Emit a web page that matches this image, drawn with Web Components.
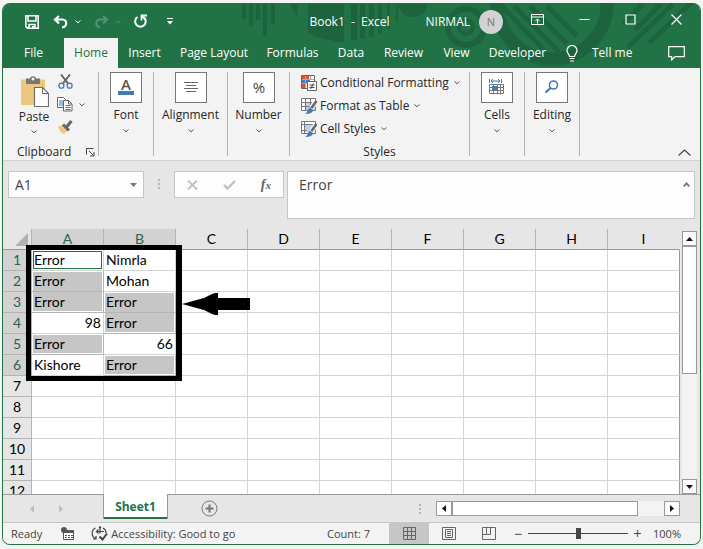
<!DOCTYPE html>
<html lang="en">
<head>
<meta charset="utf-8">
<title>Book1 - Excel</title>
<style>
html { height: 100%; }
body { margin: 0; min-height: 100%; box-sizing: border-box; padding: 3px 2px 4px; display: flex; background: #f4f4f4; font: 12px/16px "Open Sans", "Noto Sans", sans-serif; color: #262626; }
</style>
</head>
<body>
<xl-window>
  <xl-header slot="header"></xl-header>
  <xl-ribbon slot="ribbon"></xl-ribbon>
  <xl-formula-bar slot="formula" cell="A1" value="Error"></xl-formula-bar>
  <xl-grid slot="grid"></xl-grid>
  <xl-sheet-bar slot="sheets">Sheet1</xl-sheet-bar>
  <xl-status-bar slot="status"></xl-status-bar>
</xl-window>
<script>
const ICONS = {
  save: [14, 14, '<path d="M.8.8h12.4v12.4H2.6L.8 11.6zM3 1v5h8V1M4 13V9.5h6V13" fill="none" stroke="#fff" stroke-width="1.6"/><path d="M7 11h2v2.500H7z" fill="#fff"/>'],
  undo: [16, 14, '<path d="M6 1 2 4.500l4 4M2.500 4.500h7c5 0 5 7.500-.5 8" fill="none" stroke="#fff" stroke-width="2.200"/>'],
  redo: [16, 14, '<path d="m10 1 4 3.500-4 4M13.500 4.500h-6C2 4.500 2 11 7 12.500" fill="none" stroke="#569273" stroke-width="2.200"/>'],
  repeat: [15, 15, '<path d="M4.500 3A5.300 5.300 0 1 0 11 3.500" fill="none" stroke="#fff" stroke-width="2"/><path d="M8.500 6.500V1.500H14M9 2l3 3" fill="none" stroke="#fff" stroke-width="1.800"/>'],
  custom: [6, 7, '<path d="M0 .5h6" stroke="#fff"/><path d="M0 3h6L3 6.500z" fill="#fff"/>'],
  chev: [6, 4, '<path d="m.5.5 2.500 2.300L5.500.5" fill="none" stroke="currentColor"/>'],
  ribbonopts: [13, 11, '<path d="M.5.5h12v10H.5zM.5 3h12M6.500 9.500V5M4.500 7l2-2 2 2" fill="none" stroke="#fff"/>'],
  min: [11, 11, '<path d="M.5 5.500h10" stroke="#fff"/>'],
  max: [11, 11, '<path d="M1 1h9v9H1z" fill="none" stroke="#fff" stroke-width="1.200"/>'],
  close: [11, 11, '<path d="m.5.5 10 10m0-10-10 10" stroke="#fff" stroke-width="1.200"/>'],
  bulb: [12, 17, '<path d="M3.500 11.500C3.500 9 1 8.500 1 5.500a5 5 0 0 1 10 0c0 3-2.500 3.500-2.500 6zM3.500 13.500h5M4 16h4" fill="none" stroke="#fff" stroke-width="1.200"/>'],
  comment: [17, 15, '<path d="M.7.7h15.600v10H7L3.700 14v-3.300h-3z" fill="none" stroke="#fff" stroke-width="1.200"/>'],
  paste: [29, 31, '<path d="M1 3.500h24V29H1z" fill="#edc77f"/><path d="M6 2.500h4C10-.5 16-.5 16 2.500h4V8H6z" fill="#777"/><circle cx="13" cy="3" r="1.500" fill="#f3f3f3"/><path d="M14.500 11.500h8l6 6v13h-14z" fill="#fff" stroke="#6d6d6d" stroke-width="1.200"/><path d="M22.500 11.500v6h6" fill="none" stroke="#6d6d6d"/>'],
  cut: [15, 15, '<path d="m3 .5 7.500 9.500M12 .5 4.500 10" stroke="#666" stroke-width="2"/><circle cx="3.400" cy="11.700" r="2.500" fill="none" stroke="#4379b5" stroke-width="1.300"/><circle cx="11.600" cy="11.700" r="2.500" fill="none" stroke="#4379b5" stroke-width="1.300"/>'],
  copy: [16, 15, '<path d="M.5.5h6l2 2v8h-8z" fill="#fff" stroke="#666"/><path d="M2 4h4M2 6h4M2 8h4" stroke="#4379b5"/><path d="M6.500 3.500h5l3.500 3.500v7H6.500z" fill="#fff" stroke="#666"/><path d="M11.500 3.500V7H15" fill="none" stroke="#666"/><path d="M8.500 8.500h5m-5 2h5m-5 2h5" stroke="#4379b5"/>'],
  brush: [16, 14, '<path d="m1 6.500 5-1.500 5 5-4 4C4 13 2 10.500 1 6.500z" fill="#edc77f"/><path d="m6 4.500 6 6M9.500 7l5-6" stroke="#666" stroke-width="3"/>'],
  launcher: [9, 9, '<path d="M.5 6.500v-6h7M3 3l4.500 4.500M8 4v4H4" fill="none" stroke="#444"/>'],
  font: [32, 31, '<text x="16" y="18" text-anchor="middle" font-family="Open Sans" font-size="15" font-weight="600" fill="#555">A</text><path d="M8 19h16v4H8z" fill="#4379b5"/>'],
  align: [32, 31, '<path d="M9 10.500h14M11 13.500h10M9 16.500h14M11 19.500h10" stroke="#666"/>'],
  number: [32, 31, '<text x="16" y="21" text-anchor="middle" font-family="Open Sans" font-size="15" fill="#444">%</text>'],
  cells: [32, 31, '<path d="M8.500 12.500h14v9h-14zM8.500 15.500h14m-14 3h14m-10-6v10m4-10v10m3-10v10" fill="#fff" stroke="#777"/><path d="M11 14h6v4h-6z" fill="#4379b5"/><path d="M8.500 7v4m12-4v4M10 9h9M12 7l-2 2 2 2m5-4 2 2-2 2" fill="none" stroke="#4379b5"/>'],
  editing: [32, 31, '<circle cx="17.500" cy="13" r="4" fill="none" stroke="#4379b5" stroke-width="1.600"/><path d="m14.500 16-5 4.500" stroke="#4379b5" stroke-width="2.200"/>'],
  cond: [16, 16, '<path d="M.5.5h13v13H.5z" fill="#fff" stroke="#666"/><path d="M1 1h7v3H1zM1 9h4v4H1z" fill="#d65532"/><path d="M1 5h8v3H1z" fill="#4379b5"/><path d="M9.500 1v4M4.500 1v12M1 4.500h12M1 8.500h6" stroke="#aaa"/><path d="M6.500 6.500h9v9h-9z" fill="#fff" stroke="#666"/><path d="M8.500 10h5m-5 2.500h5M12.500 8.500l-3 5.500" stroke="#444"/>'],
  table: [16, 16, '<path d="M.5.5h14v12H.5z" fill="#fff"/><path d="M5 5h9v8H5z" fill="#bcd0e6"/><path d="M.5.5h14v12H.5zM.5 4.500h14m-14 4h14m-10-8v12m5-12v12" fill="none" stroke="#777"/><path d="m14.500 4-4 6" stroke="#f3f3f3" stroke-width="5"/><path d="m15.500 3-5 7" stroke="#666" stroke-width="2.500"/><path d="M4 16c3-1 2-5 5-6l3 2c0 3-4 4-8 4z" fill="#4379b5"/>'],
  styles: [16, 16, '<path d="M.5.5h14v12H.5z" fill="#fff"/><path d="M4 4h8v7H4z" fill="#bcd0e6"/><path d="M.5.5h14v12H.5zM.5 3.500h14m-11-3v12m-3-3h5" fill="none" stroke="#777"/><path d="m14.500 4-4 6" stroke="#f3f3f3" stroke-width="5"/><path d="m15.500 3-5 7" stroke="#666" stroke-width="2.500"/><path d="M4 16c3-1 2-5 5-6l3 2c0 3-4 4-8 4z" fill="#4379b5"/>'],
  collapse: [13, 7, '<path d="m.5 6.500 6-5.500 6 5.500" fill="none" stroke="#444" stroke-width="1.200"/>'],
  drop: [7, 4, '<path d="M0 0h7L3.500 4z" fill="#777"/>'],
  grip: [2, 10, '<path d="M0 0h2v2H0zM0 4h2v2H0zM0 8h2v2H0z" fill="#b4b4b4"/>'],
  cancel: [11, 10, '<path d="m1 .5 9 9m0-9-9 9" stroke="#bfbfbf" stroke-width="1.800"/>'],
  enter: [13, 10, '<path d="m1 5 3.500 3.500L12 1" fill="none" stroke="#bfbfbf" stroke-width="2.400"/>'],
  up: [7, 5, '<path d="m.7 4.300 2.800-3 2.800 3" fill="none" stroke="#777" stroke-width="1.800"/>'],
  corner: [13, 13, '<path d="M13 0v13H0z" fill="#b2b2b2"/>'],
  triup: [7, 4, '<path d="M0 4h7L3.500 0z" fill="#111"/>'],
  tridown: [7, 4, '<path d="M0 0h7L3.500 4z" fill="#111"/>'],
  trileft: [4, 7, '<path d="M4 0v7L0 3.500z" fill="#111"/>'],
  triright: [4, 7, '<path d="M0 0v7l4-3.500z" fill="#111"/>'],
  prev: [4, 8, '<path d="M4 0v8L0 4z" fill="#bdbdbd"/>'],
  next: [4, 8, '<path d="M0 0v8l4-4z" fill="#bdbdbd"/>'],
  add: [17, 17, '<circle cx="8.500" cy="8.500" r="7.500" fill="none" stroke="#777"/><path d="M8.500 4.500v8m-4-4h8" stroke="#777" stroke-width="2"/>'],
  macro: [13, 13, '<path d="M2.500 3.500h10v9h-10z" fill="#fff" stroke="#555"/><path d="M7 3h6v3H2V4z" fill="#555"/><path d="M4 8.500h2m1 0h2m1 0h2m-8 2h2m1 0h2m1 0h2" stroke="#555"/><circle cx="3" cy="3" r="3" fill="#555"/>'],
  access: [17, 15, '<path d="M4.500 2C0 4 0 10.500 4.500 12.500M2 13h3v-3M6 5.500h7M7.500 3.500l-2 2 2 2M9 2.500v5M12 2c2 1 3 2.500 3 5" fill="none" stroke="#444" stroke-width="1.200"/><circle cx="9" cy="1.500" r="1.200" fill="#444"/><path d="m8.500 10.500 3 3 4.500-6" fill="none" stroke="#444" stroke-width="2"/>'],
  normal: [13, 13, '<path d="M.5.5h12v12H.5zM.5 4.500h12m-12 4h12m-8-8v12m4-12v12" fill="none" stroke="#666"/>'],
  page: [14, 13, '<path d="M.5.5h13v12H.5zM3.500 2.500h7v8h-7zM5 4.500h4m-4 2h4m-4 2h4" fill="none" stroke="#666"/>'],
  breaks: [14, 13, '<path d="M.5.5h13v12H.5zM.5 7.500h8v-7M4.500.5v7" fill="none" stroke="#666"/>']
};

const BASE = `
  :host, *, *::before, *::after { box-sizing: border-box; }
  button, a { font: inherit; color: inherit; background: none; border: 0; padding: 0; margin: 0; text-decoration: none; white-space: nowrap; }
  button { display: inline-flex; align-items: center; justify-content: center; }
  input, textarea { font: inherit; color: inherit; border: 0; padding: 0; margin: 0; background: none; outline: none; }
`;

function define(name, css, html) {
  customElements.define(name, class extends HTMLElement {
    constructor() {
      super();
      const t = document.createElement('template');
      t.innerHTML = `<style>${BASE}${css}</style>${typeof html === 'function' ? html(this) : html}`;
      this.attachShadow({ mode: 'open' }).append(t.content.cloneNode(true));
    }
  });
}

define('xl-icon', ':host { display: inline-flex; flex: none; } svg { display: block; }', el => {
  const [w, h, body] = ICONS[el.getAttribute('name')];
  return `<svg width="${w}" height="${h}" viewBox="0 0 ${w} ${h}" aria-hidden="true">${body}</svg>`;
});

define('xl-window', `
  :host { flex: 1; min-width: 0; display: flex; flex-direction: column; border: 1px solid #217346; border-top: 0; border-radius: 8px; overflow: hidden; background: #e6e6e6; }
  .grid { flex: 1 1 0; min-height: 0; display: flex; }
`, `<slot name="header"></slot><slot name="ribbon"></slot><slot name="formula"></slot>
  <div class="grid"><slot name="grid"></slot></div><slot name="sheets"></slot><slot name="status"></slot>`);

define('xl-header', `
  :host { display: block; position: relative; background: #217346; color: #fff; }
  .art { position: absolute; top: 0; right: 0; width: 100%; height: 100%; }
  .row { position: relative; display: flex; align-items: center; }
  .title { height: 35px; padding: 2px 18px 0 22px; }
  .quick { display: flex; align-items: center; flex: 1; }
  .quick button + button { margin-left: 12px; }
  .quick .save + button { margin-left: 14px; }
  .quick button.more { margin-left: 6px; }
  .quick button.custom { margin-left: 19px; }
  .dim { color: #569273; }
  .name { margin: 0 36px 0 0; white-space: pre; }
  .user { gap: 9px; display: flex; align-items: center; margin-right: 28px; }
  .avatar { width: 24px; height: 24px; border-radius: 50%; background: #d2d2d2; color: #777; display: grid; place-items: center; font-size: 11px; }
  .controls { display: flex; gap: 35px; padding-bottom: 4px; }
  .tabs { height: 30px; padding: 0 15px 0 0; }
  nav { display: grid; grid-template-columns: 61px 54px 53px 86px 71px 46px 59px 47px 75px; height: 100%; }
  nav a { display: grid; place-items: center; }
  nav a.on { background: #f3f3f3; color: #217346; }
  .tell { gap: 14px; margin-left: 11px; }
  .end { margin-left: auto; }
`, `
  <svg class="art" viewBox="0 0 697 65" preserveAspectRatio="xMaxYMin slice" aria-hidden="true">
    <g fill="#1d633e"><path d="M239 1h4v15h-4zM246 1h4v22h-4zM253 1h4v16h-4zM260 1h4v32h-4zM268 1h4v20h-4zM287 1h7v13zM305 1h33v37q-18 0-33-8zM348 1h6v36h-6zM357 1h5v35h-5zM366 1h5v33h-5zM375 1h4v30h-4zM384 1h3v25h-3zM393 1h2v18h-2zM331 1h10v38h-10z"/><path d="M396 1a14 13 0 0 0 28 0z"/></g>
    <g fill="none" stroke="#1d633e"><circle cx="463" cy="24" r="18" stroke-width="6"/><circle cx="463" cy="24" r="7" stroke-width="4"/><circle cx="549" cy="1" r="55" stroke-width="13"/><path d="m499 3 42 44m-30-44 45 46m-29-46 37 38m-20-38 30 30M625 44l45-43M646 40l44-42M620 21l20-20m18 0-26 26" stroke-width="5"/></g>
  </svg>
  <div class="row title">
    <div class="quick">
      <button class="save" aria-label="Save"><xl-icon name="save"></xl-icon></button>
      <button aria-label="Undo"><xl-icon name="undo"></xl-icon></button>
      <button class="more" aria-label="Undo list"><xl-icon name="chev"></xl-icon></button>
      <button aria-label="Redo"><xl-icon name="redo"></xl-icon></button>
      <button class="more dim" aria-label="Redo list"><xl-icon name="chev"></xl-icon></button>
      <button aria-label="Repeat"><xl-icon name="repeat"></xl-icon></button>
      <button class="custom" aria-label="Customize"><xl-icon name="custom"></xl-icon></button>
    </div>
    <div class="name">Book1  -  Excel</div>
    <div class="user"><span>NIRMAL</span><span class="avatar">N</span></div>
    <div class="controls">
      <button aria-label="Ribbon display options"><xl-icon name="ribbonopts"></xl-icon></button>
      <button aria-label="Minimize"><xl-icon name="min"></xl-icon></button>
      <button aria-label="Maximize"><xl-icon name="max"></xl-icon></button>
      <button aria-label="Close"><xl-icon name="close"></xl-icon></button>
    </div>
  </div>
  <div class="row tabs">
    <nav><a href="#file">File</a><a href="#home" class="on">Home</a><a href="#insert">Insert</a><a href="#layout">Page Layout</a><a href="#formulas">Formulas</a><a href="#data">Data</a><a href="#review">Review</a><a href="#view">View</a><a href="#dev">Developer</a></nav>
    <button class="tell"><xl-icon name="bulb"></xl-icon>Tell me</button>
    <button class="end" aria-label="Comments"><xl-icon name="comment"></xl-icon></button>
  </div>`);

define('xl-ribbon-group', `
  :host { display: flex; flex-direction: column; justify-content: space-between; width: 55px; border-right: 1px solid #b4b4b4; }
  .body { display: flex; flex: 1; min-height: 0; }
`, `<div class="body"><slot></slot></div><slot name="label"></slot>`);

define('xl-big-button', `
  :host { display: block; flex: 1; min-width: 0; }
  button { width: 100%; flex-direction: column; color: #262626; }
  .box { border: 1px solid #777; background: #fff; width: 32px; height: 31px; display: grid; place-items: center; place-content: center; margin-bottom: 4px; }
  .chev { color: #555; margin-top: 6px; }
`, el => `<button><span class="box"><xl-icon name="${el.getAttribute('icon')}"></xl-icon></span><slot></slot><xl-icon class="chev" name="chev"></xl-icon></button>`);

define('xl-menu-button', `
  :host { display: block; height: 23px; }
  button { gap: 3px; height: 20px; }
  .chev { color: #555; margin-left: 2px; }
`, el => `<button><xl-icon name="${el.getAttribute('icon')}"></xl-icon><slot></slot><xl-icon class="chev" name="chev"></xl-icon></button>`);

define('xl-ribbon', `
  :host { display: flex; height: 93px; padding: 4px 9px 4px 0; background: #f3f3f3; border-bottom: 1px solid #d0d0d0; }
  .clip { width: 96px; } .w62 { width: 62px; } .w74 { width: 74px; } .styles { width: 180px; }
  .paste { flex-direction: column; width: 32px; margin: 4px 0 0 15px; justify-content: flex-start; align-self: flex-start; gap: 2px; }
  .paste .chev { margin-top: 3px; color: #555; }
  .small { display: grid; grid-template-columns: 18px 6px; column-gap: 5px; align-content: start; row-gap: 8px; margin: 2px 0 0 6px; color: #555; }
  .label { display: flex; justify-content: center; align-items: center; height: 16px; margin-bottom: -4px; }
  .clip .label { justify-content: space-between; padding: 0 3px 0 14px; }
  .list { padding: 1px 0 0 11px; }
  .fold { margin: auto 0 0 auto; }
`, `
  <xl-ribbon-group class="clip">
    <button class="paste"><xl-icon name="paste"></xl-icon>Paste<xl-icon class="chev" name="chev"></xl-icon></button>
    <div class="small"><button aria-label="Cut"><xl-icon name="cut"></xl-icon></button><span></span>
      <button aria-label="Copy"><xl-icon name="copy"></xl-icon></button><button aria-label="Copy options"><xl-icon name="chev"></xl-icon></button>
      <button aria-label="Format painter"><xl-icon name="brush"></xl-icon></button></div>
    <div slot="label" class="label">Clipboard<button aria-label="Clipboard settings"><xl-icon name="launcher"></xl-icon></button></div>
  </xl-ribbon-group>
  <xl-ribbon-group><xl-big-button icon="font">Font</xl-big-button></xl-ribbon-group>
  <xl-ribbon-group class="w74"><xl-big-button icon="align">Alignment</xl-big-button></xl-ribbon-group>
  <xl-ribbon-group class="w62"><xl-big-button icon="number">Number</xl-big-button></xl-ribbon-group>
  <xl-ribbon-group class="styles"><div class="list">
    <xl-menu-button icon="cond">Conditional Formatting</xl-menu-button>
    <xl-menu-button icon="table">Format as Table</xl-menu-button>
    <xl-menu-button icon="styles">Cell Styles</xl-menu-button></div>
    <div slot="label" class="label">Styles</div>
  </xl-ribbon-group>
  <xl-ribbon-group><xl-big-button icon="cells">Cells</xl-big-button></xl-ribbon-group>
  <xl-ribbon-group><xl-big-button icon="editing">Editing</xl-big-button></xl-ribbon-group>
  <button class="fold" aria-label="Collapse ribbon"><xl-icon name="collapse"></xl-icon></button>`);

define('xl-formula-bar', `
  :host { display: flex; align-items: flex-start; padding: 10px 5px 10px 5px; font-size: 14px; line-height: 20px; color: #444; }
  .box { background: #fdfdfd; border: 1px solid #c6c6c6; display: flex; align-items: center; }
  .name { width: 136px; height: 27px; padding: 0 6px; }
  .name input { flex: 1; min-width: 0; }
  .grip { margin: 8px 14px 0; }
  .tools { width: 110px; height: 27px; justify-content: space-between; padding: 0 12px; margin-right: 3px; }
  .fx { font: italic bold 14px/16px "Liberation Serif", serif; color: #666; }
  .fx small { font-size: 11px; }
  .formula { flex: 1; height: 48px; align-items: flex-start; padding: 3px 4px 0 11px; }
  textarea { flex: 1; min-width: 0; resize: none; height: 40px; overflow: hidden; }
  .formula button { margin-top: 7px; }
`, el => `
  <div class="box name"><input aria-label="Name box" value="${el.getAttribute('cell')}"><button aria-label="Names"><xl-icon name="drop"></xl-icon></button></div>
  <xl-icon class="grip" name="grip"></xl-icon>
  <div class="box tools"><button aria-label="Cancel"><xl-icon name="cancel"></xl-icon></button><button aria-label="Enter"><xl-icon name="enter"></xl-icon></button><button class="fx" aria-label="Insert function">f<small>x</small></button></div>
  <div class="box formula"><textarea aria-label="Formula">${el.getAttribute('value')}</textarea><button aria-label="Collapse formula bar"><xl-icon name="up"></xl-icon></button></div>`);

const DATA = [['Error', 'Nimrla'], ['Error', 'Mohan'], ['Error', 'Error'], ['98', 'Error'], ['Error', '66'], ['Kishore', 'Error']];
const COLS = 'ABCDEFGHI'.split('');
function cell(r, c) {
  const v = (DATA[r] || [])[c];
  if (v === undefined) return '<td></td>';
  const picked = (i) => (DATA[i] || [])[c] === 'Error' && !(i === 0 && c === 0);
  const k = [];
  if (r === 0 && c === 0) k.push('active');
  else if (v === 'Error') { k.push('sel'); if (!picked(r - 1)) k.push('top'); if (!picked(r + 1)) k.push('bottom'); }
  if (/^\d/.test(v)) k.push('num');
  return `<td class="${k.join(' ')}"><span>${v}</span></td>`;
}
define('xl-grid', `
  :host { flex: 1; min-width: 0; display: flex; }
  .sheet { position: relative; flex: 1; min-width: 0; overflow: hidden; height: 100%; }
  table { width: 100%; table-layout: fixed; border-collapse: separate; border-spacing: 0; background: #fff; font: 14px/20px Lato, "Open Sans", sans-serif; color: #000; }
  th, td { height: 21px; padding: 0; border: 0 solid #d4d4d4; border-width: 0 1px 1px 0; font-weight: 400; text-align: left; white-space: nowrap; }
  th { background: #e6e6e6; text-align: center; border-color: #b4b4b4; }
  thead th { border-bottom-color: #999; }
  th.on { background: #d2d2d2; color: #276748; }
  .rowhead { width: 29px; }
  tr > :last-child { border-right-color: #999; }
  thead th:last-child { border-right-color: #e6e6e6; }
  thead th:first-child { padding: 0 3px 0 0; }
  thead th:first-child xl-icon { float: right; }
  td span { display: block; height: 20px; padding: 0 2px; border: 0 solid #fff; }
  .num span { text-align: right; }
  .sel { border-color: #b4b4b4; }
  .sel span { background: #c6c6c6; border-width: 0 1px; padding: 0 1px; }
  .sel.top span { border-top-width: 1px; line-height: 18px; }
  .sel.bottom span { border-bottom-width: 1px; }
  .active span { outline: 1px solid #217346; outline-offset: -2px; }
  .frame { position: absolute; left: 23px; top: 16px; width: calc((100% - 29px) / 9 * 2 + 12px); height: 136px; border: 5px solid #000; border-width: 5px 6px 5px 5px; }
  .arrow { position: absolute; left: 100%; top: 43px; margin-left: 6px; }
  .scroll { width: 20px; padding: 2px 3px 0 2px; display: flex; flex-direction: column; }
  .scroll button { height: 15px; border: 1px solid #999; background: #fff; }
  .track { flex: 1; background: #f3f3f3; }
  .thumb { height: 55%; background: #fff; border: 1px solid #999; }
`, `
  <div class="sheet">
    <table>
      <thead><tr><th class="rowhead"><xl-icon name="corner"></xl-icon></th>${COLS.map((c, i) => `<th class="${i < 2 ? 'on' : ''}">${c}</th>`).join('')}</tr></thead>
      <tbody>${Array.from({ length: 12 }, (_, r) => `<tr><th class="${r < 6 ? 'on' : ''}">${r + 1}</th>${COLS.map((_, c) => cell(r, c)).join('')}</tr>`).join('')}</tbody>
    </table>
    <div class="frame"><svg class="arrow" width="69" height="22" viewBox="0 0 69 22" aria-hidden="true"><path d="M0 11 11 8l11-3 8-4 3-1h3v5h32v12H36v5h-3l-3-1-8-4-11-3z"/></svg></div>
  </div>
  <div class="scroll"><button aria-label="Scroll up"><xl-icon name="triup"></xl-icon></button><div class="track"><div class="thumb"></div></div><button aria-label="Scroll down"><xl-icon name="tridown"></xl-icon></button></div>`);

define('xl-sheet-bar', `
  :host { display: flex; align-items: center; height: 28px; border-top: 1px solid #999; background: #e6e6e6; padding-right: 20px; }
  .nav { display: flex; width: 100px; padding-left: 27px; gap: 25px; }
  .tab { align-self: flex-start; width: 65px; height: 25px; margin-top: -1px; background: #fff; border: 1px solid #999; border-width: 0 1px 0; box-shadow: inset 0 -2px #217346; color: #217346; font-weight: 700; display: grid; place-items: center; }
  .add { margin-left: 33px; }
  .grip { margin-left: auto; }
  .scroll { display: flex; margin-left: 15px; width: 36%; height: 15px; background: #f3f3f3; }
  .scroll button { width: 16px; background: #fff; border: 1px solid #999; }
  .thumb { width: 76%; background: #fff; border: 1px solid #999; }
  .scroll button:last-child { margin-left: auto; }
`, `
  <div class="nav"><button aria-label="Previous sheet"><xl-icon name="prev"></xl-icon></button><button aria-label="Next sheet"><xl-icon name="next"></xl-icon></button></div>
  <a class="tab" href="#sheet1"><slot></slot></a>
  <button class="add" aria-label="New sheet"><xl-icon name="add"></xl-icon></button>
  <xl-icon class="grip" name="grip"></xl-icon>
  <div class="scroll"><button aria-label="Scroll left"><xl-icon name="trileft"></xl-icon></button><div class="thumb"></div><button aria-label="Scroll right"><xl-icon name="triright"></xl-icon></button></div>`);

define('xl-status-bar', `
  :host { display: flex; align-items: center; height: 22px; background: #f3f3f3; border-top: 1px solid #c6c6c6; font-size: 11px; padding: 0 19px 0 8px; color: #444; }
  .macro { margin-left: 19px; }
  .acc { margin-left: 17px; gap: 3px; }
  .count { margin: 0 19px 0 auto; }
  .views { display: flex; height: 100%; }
  .views button { width: 40px; }
  .views .on { background: #c6c6c6; }
  .zoom { display: flex; align-items: center; gap: 5px; margin: 0 11px 0 5px; }
  .zoom button { width: 9px; font-size: 14px; }
  input { appearance: none; width: 100px; height: 12px; background: linear-gradient(#444, #444) center / 100% 1px no-repeat; }
  input::-webkit-slider-thumb { appearance: none; width: 5px; height: 11px; background: #444; }
`, `
  <span>Ready</span>
  <button class="macro" aria-label="Record macro"><xl-icon name="macro"></xl-icon></button>
  <button class="acc"><xl-icon name="access"></xl-icon>Accessibility: Good to go</button>
  <span class="count">Count: 7</span>
  <div class="views"><button class="on" aria-label="Normal"><xl-icon name="normal"></xl-icon></button><button aria-label="Page layout"><xl-icon name="page"></xl-icon></button><button aria-label="Page breaks"><xl-icon name="breaks"></xl-icon></button></div>
  <div class="zoom"><button aria-label="Zoom out">−</button><input type="range" aria-label="Zoom" min="0" max="200" value="100"><button aria-label="Zoom in">+</button></div>
  <span>100%</span>`);
</script>
</body>
</html>
